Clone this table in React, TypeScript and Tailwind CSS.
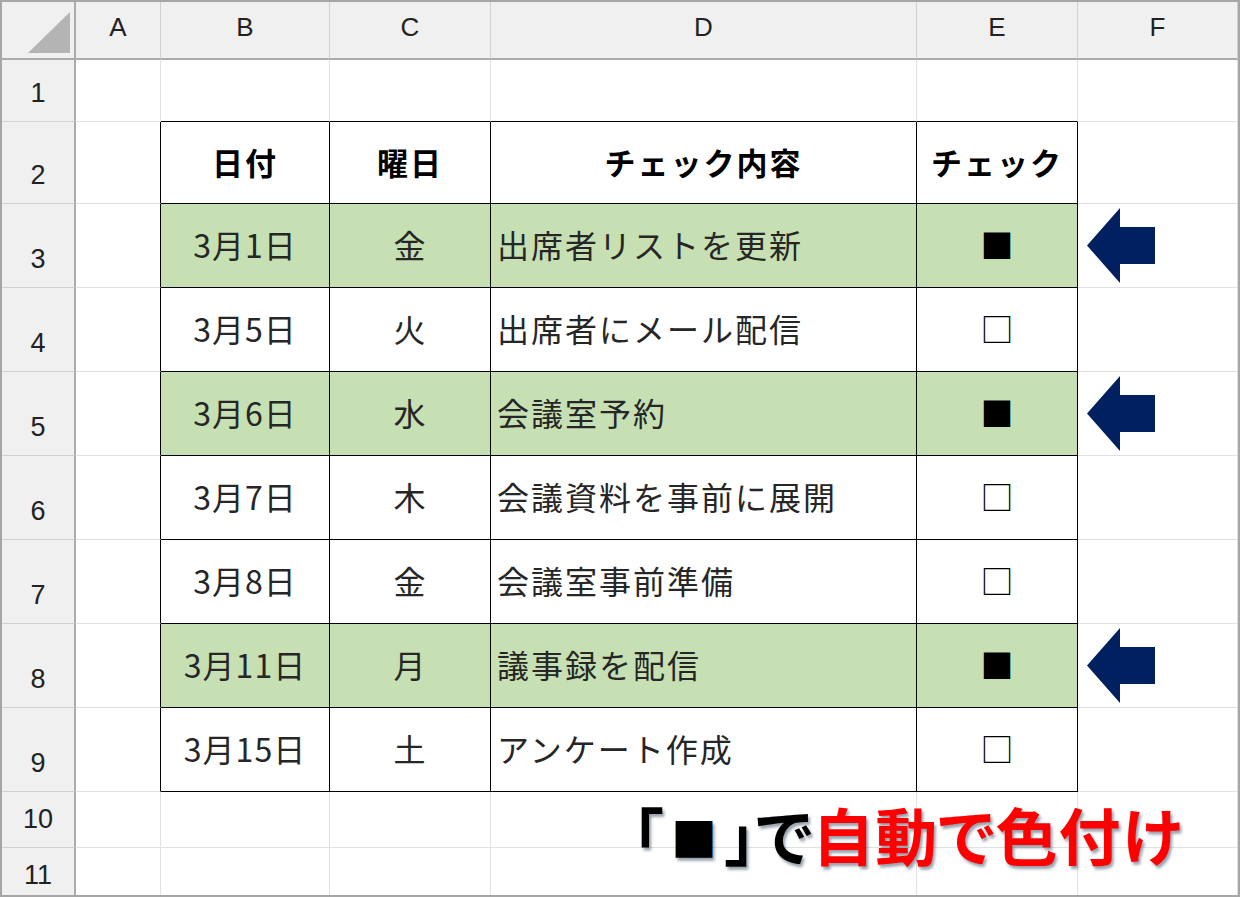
import React from 'react'

type Task = { date: string; day: string; task: string; done: boolean }

const tasks: Task[] = [
  { date: '3月1日', day: '金', task: '出席者リストを更新', done: true },
  { date: '3月5日', day: '火', task: '出席者にメール配信', done: false },
  { date: '3月6日', day: '水', task: '会議室予約', done: true },
  { date: '3月7日', day: '木', task: '会議資料を事前に展開', done: false },
  { date: '3月8日', day: '金', task: '会議室事前準備', done: false },
  { date: '3月11日', day: '月', task: '議事録を配信', done: true },
  { date: '3月15日', day: '土', task: 'アンケート作成', done: false },
]

const letters = ['A', 'B', 'C', 'D', 'E', 'F']

function Arrow() {
  return (
    <svg width="68" height="75" viewBox="0 0 68 75">
      <polygon points="0,37.5 33,0 33,19 68,19 68,56 33,56 33,75" fill="#002060" />
    </svg>
  )
}

function Corner() {
  return (
    <div className="bg-[#f0f0f0] border-r-2 border-r-[#ababab] border-b-2 border-b-[#ababab] flex items-end justify-end pr-[4px] pb-[5px]">
      <svg width="42" height="41" viewBox="0 0 42 41">
        <polygon points="42,0 42,41 0,41" fill="#b4b4b4" />
      </svg>
    </div>
  )
}

function cellBorder(r: number, c: number) {
  const inTable = r >= 2 && r <= 9 && c >= 2 && c <= 5
  if (inTable) return 'border-r border-b border-black'
  if (c === 1 && r >= 2 && r <= 9) return 'border-r border-b border-b-[#e1e1e1] border-r-black'
  if (r === 1 && c >= 2 && c <= 5) return 'border-r border-b border-r-[#e1e1e1] border-b-black'
  return 'border-r border-b border-[#e1e1e1]'
}

function SheetCell({ r, c }: { r: number; c: number }) {
  const border = cellBorder(r, c)
  const t = r >= 3 && r <= 9 ? tasks[r - 3] : null
  const green = t && t.done && c >= 2 && c <= 5 ? 'bg-[#c6e0b4]' : 'bg-white'

  if (r === 2 && c >= 2 && c <= 5) {
    const label = ['日付', '曜日', 'チェック内容', 'チェック'][c - 2]
    return (
      <div className={`${border} bg-white flex items-center justify-center pb-[3px] text-[31px] tracking-[2px] font-bold text-black leading-none`}>
        {label}
      </div>
    )
  }

  if (t && c >= 2 && c <= 5) {
    if (c === 2 || c === 3) {
      return (
        <div className={`${border} ${green} flex items-center justify-center pb-[3px] text-[32px] tracking-[1px] text-[#262626] leading-none`}>
          {c === 2 ? t.date : t.day}
        </div>
      )
    }
    if (c === 4) {
      return (
        <div className={`${border} ${green} flex items-center justify-start pl-[6px] pb-[3px] text-[32px] tracking-[2px] text-[#262626] leading-none`}>
          {t.task}
        </div>
      )
    }
    return (
      <div className={`${border} ${green} flex items-center justify-center pb-[3px] text-[33px] text-black leading-none`}>
        {t.done ? '■' : '□'}
      </div>
    )
  }

  if (t && c === 6 && t.done) {
    return (
      <div className={`${border} bg-white flex items-center pl-[9px]`}>
        <Arrow />
      </div>
    )
  }

  return <div className={`${border} bg-white`} />
}

export default function App() {
  const rows = Array.from({ length: 11 }, (_, i) => i + 1)

  return (
    <div className="relative w-[1240px] h-[897px] overflow-hidden border-2 border-[#a6a6a6] bg-white font-['Noto_Sans_CJK_JP',sans-serif]">
      <div className="grid grid-cols-[74px_85px_169px_161px_426px_161px_160px] grid-rows-[58px_62px_82px_repeat(7,84px)_56px_56px]">
        <Corner />
        {letters.map((l) => (
          <div
            key={l}
            className="bg-[#f0f0f0] border-b-2 border-b-[#ababab] border-r border-r-[#d0d0d0] flex items-center justify-center pb-[6px] text-[26px] text-[#222] font-['Liberation_Sans',sans-serif]"
          >
            {l}
          </div>
        ))}
        {rows.map((r) => (
          <React.Fragment key={r}>
            <div className="bg-[#f0f0f0] border-r-2 border-r-[#ababab] border-b border-b-[#d0d0d0] flex items-end justify-center pb-[14px] text-[27px] leading-none text-[#222] font-['Liberation_Sans',sans-serif]">
              {r}
            </div>
            {letters.map((_, ci) => (
              <SheetCell key={ci} r={r} c={ci + 1} />
            ))}
          </React.Fragment>
        ))}
      </div>

      {/* caption over rows 10-11 */}
      <div className="absolute left-[630px] top-[801px] flex items-center text-[62px] font-bold leading-none [font-feature-settings:'palt'] [text-shadow:2px_3px_3px_rgba(68,84,106,0.55)]">
        <span className="text-black">「</span>
        <span className="text-black text-[46px] px-[8px] pt-[4px]">■</span>
        <span className="text-black">」で</span>
        <span className="text-[#ff0000] tracking-[1px]">自動で色付け</span>
      </div>
    </div>
  )
}
